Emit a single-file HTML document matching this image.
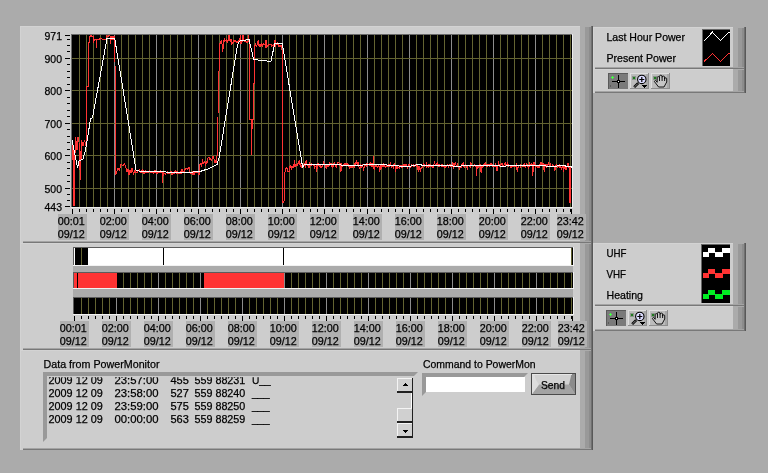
<!DOCTYPE html>
<html><head><meta charset="utf-8"><title>PowerMonitor</title>
<style>html,body{margin:0;padding:0;background:#ababab;}svg{display:block;will-change:transform}</style></head>
<body><svg width="768" height="473" viewBox="0 0 768 473">
<rect width="768" height="473" fill="#ababab"/>
<rect x="20" y="26" width="560" height="217" fill="#cdcdcd" />
<rect x="20" y="26" width="560" height="1" fill="#d3d3d3" />
<rect x="20" y="26" width="1" height="217" fill="#d3d3d3" />
<rect x="580" y="27" width="5" height="216" fill="#ababab" />
<rect x="585" y="27" width="6" height="216" fill="#999999" />
<rect x="589" y="27" width="2" height="216" fill="#8c8c8c" />
<rect x="591" y="26" width="1" height="217" fill="#707070" />
<rect x="592" y="26" width="1" height="217" fill="#585858" />
<rect x="23" y="241" width="568" height="1" fill="#a4a4a4" />
<rect x="23" y="242" width="568" height="1" fill="#787878" />
<rect x="20" y="243" width="560" height="107" fill="#cdcdcd" />
<rect x="20" y="243" width="560" height="1" fill="#d3d3d3" />
<rect x="20" y="243" width="1" height="107" fill="#d3d3d3" />
<rect x="580" y="244" width="5" height="106" fill="#ababab" />
<rect x="585" y="244" width="6" height="106" fill="#999999" />
<rect x="589" y="244" width="2" height="106" fill="#8c8c8c" />
<rect x="591" y="243" width="1" height="107" fill="#707070" />
<rect x="592" y="243" width="1" height="107" fill="#585858" />
<rect x="23" y="348" width="568" height="1" fill="#a4a4a4" />
<rect x="23" y="349" width="568" height="1" fill="#787878" />
<rect x="20" y="350" width="560" height="100" fill="#cdcdcd" />
<rect x="20" y="350" width="560" height="1" fill="#d3d3d3" />
<rect x="20" y="350" width="1" height="100" fill="#d3d3d3" />
<rect x="580" y="351" width="5" height="99" fill="#ababab" />
<rect x="585" y="351" width="6" height="99" fill="#999999" />
<rect x="589" y="351" width="2" height="99" fill="#8c8c8c" />
<rect x="591" y="350" width="1" height="100" fill="#707070" />
<rect x="592" y="350" width="1" height="100" fill="#585858" />
<rect x="23" y="448" width="568" height="1" fill="#a4a4a4" />
<rect x="23" y="449" width="568" height="1" fill="#787878" />
<rect x="71" y="34" width="502" height="174" fill="#ececec" />
<rect x="71" y="34" width="501" height="173" fill="#6a6a6a" />
<rect x="72" y="35" width="500" height="172" fill="#000" />
<g shape-rendering="crispEdges">
<rect x="79" y="35" width="1" height="172" fill="#636331"/>
<rect x="86" y="35" width="1" height="172" fill="#636331"/>
<rect x="93" y="35" width="1" height="172" fill="#636331"/>
<rect x="100" y="35" width="1" height="172" fill="#636331"/>
<rect x="107" y="35" width="1" height="172" fill="#636331"/>
<rect x="114" y="35" width="1" height="172" fill="#8c8c8c"/>
<rect x="121" y="35" width="1" height="172" fill="#636331"/>
<rect x="128" y="35" width="1" height="172" fill="#636331"/>
<rect x="135" y="35" width="1" height="172" fill="#636331"/>
<rect x="142" y="35" width="1" height="172" fill="#636331"/>
<rect x="149" y="35" width="1" height="172" fill="#636331"/>
<rect x="156" y="35" width="1" height="172" fill="#8c8c8c"/>
<rect x="163" y="35" width="1" height="172" fill="#636331"/>
<rect x="170" y="35" width="1" height="172" fill="#636331"/>
<rect x="177" y="35" width="1" height="172" fill="#636331"/>
<rect x="184" y="35" width="1" height="172" fill="#636331"/>
<rect x="191" y="35" width="1" height="172" fill="#636331"/>
<rect x="198" y="35" width="1" height="172" fill="#8c8c8c"/>
<rect x="205" y="35" width="1" height="172" fill="#636331"/>
<rect x="212" y="35" width="1" height="172" fill="#636331"/>
<rect x="219" y="35" width="1" height="172" fill="#636331"/>
<rect x="226" y="35" width="1" height="172" fill="#636331"/>
<rect x="233" y="35" width="1" height="172" fill="#636331"/>
<rect x="240" y="35" width="1" height="172" fill="#8c8c8c"/>
<rect x="247" y="35" width="1" height="172" fill="#636331"/>
<rect x="254" y="35" width="1" height="172" fill="#636331"/>
<rect x="261" y="35" width="1" height="172" fill="#636331"/>
<rect x="268" y="35" width="1" height="172" fill="#636331"/>
<rect x="275" y="35" width="1" height="172" fill="#636331"/>
<rect x="282" y="35" width="1" height="172" fill="#8c8c8c"/>
<rect x="289" y="35" width="1" height="172" fill="#636331"/>
<rect x="296" y="35" width="1" height="172" fill="#636331"/>
<rect x="303" y="35" width="1" height="172" fill="#636331"/>
<rect x="310" y="35" width="1" height="172" fill="#636331"/>
<rect x="317" y="35" width="1" height="172" fill="#636331"/>
<rect x="324" y="35" width="1" height="172" fill="#8c8c8c"/>
<rect x="332" y="35" width="1" height="172" fill="#636331"/>
<rect x="339" y="35" width="1" height="172" fill="#636331"/>
<rect x="346" y="35" width="1" height="172" fill="#636331"/>
<rect x="353" y="35" width="1" height="172" fill="#636331"/>
<rect x="360" y="35" width="1" height="172" fill="#636331"/>
<rect x="367" y="35" width="1" height="172" fill="#8c8c8c"/>
<rect x="374" y="35" width="1" height="172" fill="#636331"/>
<rect x="381" y="35" width="1" height="172" fill="#636331"/>
<rect x="388" y="35" width="1" height="172" fill="#636331"/>
<rect x="395" y="35" width="1" height="172" fill="#636331"/>
<rect x="402" y="35" width="1" height="172" fill="#636331"/>
<rect x="409" y="35" width="1" height="172" fill="#8c8c8c"/>
<rect x="416" y="35" width="1" height="172" fill="#636331"/>
<rect x="423" y="35" width="1" height="172" fill="#636331"/>
<rect x="430" y="35" width="1" height="172" fill="#636331"/>
<rect x="437" y="35" width="1" height="172" fill="#636331"/>
<rect x="444" y="35" width="1" height="172" fill="#636331"/>
<rect x="451" y="35" width="1" height="172" fill="#8c8c8c"/>
<rect x="458" y="35" width="1" height="172" fill="#636331"/>
<rect x="465" y="35" width="1" height="172" fill="#636331"/>
<rect x="472" y="35" width="1" height="172" fill="#636331"/>
<rect x="479" y="35" width="1" height="172" fill="#636331"/>
<rect x="486" y="35" width="1" height="172" fill="#636331"/>
<rect x="493" y="35" width="1" height="172" fill="#8c8c8c"/>
<rect x="500" y="35" width="1" height="172" fill="#636331"/>
<rect x="507" y="35" width="1" height="172" fill="#636331"/>
<rect x="514" y="35" width="1" height="172" fill="#636331"/>
<rect x="521" y="35" width="1" height="172" fill="#636331"/>
<rect x="528" y="35" width="1" height="172" fill="#636331"/>
<rect x="535" y="35" width="1" height="172" fill="#8c8c8c"/>
<rect x="542" y="35" width="1" height="172" fill="#636331"/>
<rect x="549" y="35" width="1" height="172" fill="#636331"/>
<rect x="556" y="35" width="1" height="172" fill="#636331"/>
<rect x="563" y="35" width="1" height="172" fill="#636331"/>
<rect x="570" y="35" width="1" height="172" fill="#636331"/>
<rect x="72" y="58" width="500" height="1" fill="#636331"/>
<rect x="72" y="90" width="500" height="1" fill="#636331"/>
<rect x="72" y="123" width="500" height="1" fill="#636331"/>
<rect x="72" y="155" width="500" height="1" fill="#636331"/>
<rect x="72" y="188" width="500" height="1" fill="#636331"/>
<rect x="65" y="35" width="5" height="1" fill="#000"/>
<rect x="65" y="58" width="5" height="1" fill="#000"/>
<rect x="65" y="90" width="5" height="1" fill="#000"/>
<rect x="65" y="123" width="5" height="1" fill="#000"/>
<rect x="65" y="155" width="5" height="1" fill="#000"/>
<rect x="65" y="188" width="5" height="1" fill="#000"/>
<rect x="65" y="206" width="5" height="1" fill="#000"/>
<rect x="67" y="200" width="3" height="1" fill="#000"/>
<rect x="67" y="194" width="3" height="1" fill="#000"/>
<rect x="67" y="181" width="3" height="1" fill="#000"/>
<rect x="67" y="175" width="3" height="1" fill="#000"/>
<rect x="67" y="168" width="3" height="1" fill="#000"/>
<rect x="67" y="162" width="3" height="1" fill="#000"/>
<rect x="67" y="149" width="3" height="1" fill="#000"/>
<rect x="67" y="142" width="3" height="1" fill="#000"/>
<rect x="67" y="136" width="3" height="1" fill="#000"/>
<rect x="67" y="129" width="3" height="1" fill="#000"/>
<rect x="67" y="116" width="3" height="1" fill="#000"/>
<rect x="67" y="110" width="3" height="1" fill="#000"/>
<rect x="67" y="103" width="3" height="1" fill="#000"/>
<rect x="67" y="97" width="3" height="1" fill="#000"/>
<rect x="67" y="84" width="3" height="1" fill="#000"/>
<rect x="67" y="77" width="3" height="1" fill="#000"/>
<rect x="67" y="71" width="3" height="1" fill="#000"/>
<rect x="67" y="64" width="3" height="1" fill="#000"/>
<rect x="67" y="51" width="3" height="1" fill="#000"/>
<rect x="67" y="45" width="3" height="1" fill="#000"/>
<rect x="67" y="39" width="3" height="1" fill="#000"/>
<rect x="72" y="209" width="1" height="5" fill="#000"/>
<rect x="571" y="209" width="1" height="5" fill="#000"/>
<rect x="79" y="209" width="1" height="3" fill="#000"/>
<rect x="86" y="209" width="1" height="3" fill="#000"/>
<rect x="93" y="209" width="1" height="3" fill="#000"/>
<rect x="100" y="209" width="1" height="3" fill="#000"/>
<rect x="107" y="209" width="1" height="3" fill="#000"/>
<rect x="114" y="209" width="1" height="5" fill="#000"/>
<rect x="121" y="209" width="1" height="3" fill="#000"/>
<rect x="128" y="209" width="1" height="3" fill="#000"/>
<rect x="135" y="209" width="1" height="3" fill="#000"/>
<rect x="142" y="209" width="1" height="3" fill="#000"/>
<rect x="149" y="209" width="1" height="3" fill="#000"/>
<rect x="156" y="209" width="1" height="5" fill="#000"/>
<rect x="163" y="209" width="1" height="3" fill="#000"/>
<rect x="170" y="209" width="1" height="3" fill="#000"/>
<rect x="177" y="209" width="1" height="3" fill="#000"/>
<rect x="184" y="209" width="1" height="3" fill="#000"/>
<rect x="191" y="209" width="1" height="3" fill="#000"/>
<rect x="198" y="209" width="1" height="5" fill="#000"/>
<rect x="205" y="209" width="1" height="3" fill="#000"/>
<rect x="212" y="209" width="1" height="3" fill="#000"/>
<rect x="219" y="209" width="1" height="3" fill="#000"/>
<rect x="226" y="209" width="1" height="3" fill="#000"/>
<rect x="233" y="209" width="1" height="3" fill="#000"/>
<rect x="240" y="209" width="1" height="5" fill="#000"/>
<rect x="247" y="209" width="1" height="3" fill="#000"/>
<rect x="254" y="209" width="1" height="3" fill="#000"/>
<rect x="261" y="209" width="1" height="3" fill="#000"/>
<rect x="268" y="209" width="1" height="3" fill="#000"/>
<rect x="275" y="209" width="1" height="3" fill="#000"/>
<rect x="282" y="209" width="1" height="5" fill="#000"/>
<rect x="289" y="209" width="1" height="3" fill="#000"/>
<rect x="296" y="209" width="1" height="3" fill="#000"/>
<rect x="303" y="209" width="1" height="3" fill="#000"/>
<rect x="310" y="209" width="1" height="3" fill="#000"/>
<rect x="317" y="209" width="1" height="3" fill="#000"/>
<rect x="324" y="209" width="1" height="5" fill="#000"/>
<rect x="332" y="209" width="1" height="3" fill="#000"/>
<rect x="339" y="209" width="1" height="3" fill="#000"/>
<rect x="346" y="209" width="1" height="3" fill="#000"/>
<rect x="353" y="209" width="1" height="3" fill="#000"/>
<rect x="360" y="209" width="1" height="3" fill="#000"/>
<rect x="367" y="209" width="1" height="5" fill="#000"/>
<rect x="374" y="209" width="1" height="3" fill="#000"/>
<rect x="381" y="209" width="1" height="3" fill="#000"/>
<rect x="388" y="209" width="1" height="3" fill="#000"/>
<rect x="395" y="209" width="1" height="3" fill="#000"/>
<rect x="402" y="209" width="1" height="3" fill="#000"/>
<rect x="409" y="209" width="1" height="5" fill="#000"/>
<rect x="416" y="209" width="1" height="3" fill="#000"/>
<rect x="423" y="209" width="1" height="3" fill="#000"/>
<rect x="430" y="209" width="1" height="3" fill="#000"/>
<rect x="437" y="209" width="1" height="3" fill="#000"/>
<rect x="444" y="209" width="1" height="3" fill="#000"/>
<rect x="451" y="209" width="1" height="5" fill="#000"/>
<rect x="458" y="209" width="1" height="3" fill="#000"/>
<rect x="465" y="209" width="1" height="3" fill="#000"/>
<rect x="472" y="209" width="1" height="3" fill="#000"/>
<rect x="479" y="209" width="1" height="3" fill="#000"/>
<rect x="486" y="209" width="1" height="3" fill="#000"/>
<rect x="493" y="209" width="1" height="5" fill="#000"/>
<rect x="500" y="209" width="1" height="3" fill="#000"/>
<rect x="507" y="209" width="1" height="3" fill="#000"/>
<rect x="514" y="209" width="1" height="3" fill="#000"/>
<rect x="521" y="209" width="1" height="3" fill="#000"/>
<rect x="528" y="209" width="1" height="3" fill="#000"/>
<rect x="535" y="209" width="1" height="5" fill="#000"/>
<rect x="542" y="209" width="1" height="3" fill="#000"/>
<rect x="549" y="209" width="1" height="3" fill="#000"/>
<rect x="556" y="209" width="1" height="3" fill="#000"/>
<rect x="563" y="209" width="1" height="3" fill="#000"/>
<rect x="570" y="209" width="1" height="3" fill="#000"/>
</g>
<g font-family="Liberation Sans, sans-serif" font-size="11" stroke="#000" stroke-width="0.25" fill="#000">
<text x="62" y="40" text-anchor="end"  textLength="17.5" lengthAdjust="spacingAndGlyphs">971</text>
<text x="62" y="63" text-anchor="end"  textLength="17.5" lengthAdjust="spacingAndGlyphs">900</text>
<text x="62" y="95" text-anchor="end"  textLength="17.5" lengthAdjust="spacingAndGlyphs">800</text>
<text x="62" y="128" text-anchor="end"  textLength="17.5" lengthAdjust="spacingAndGlyphs">700</text>
<text x="62" y="160" text-anchor="end"  textLength="17.5" lengthAdjust="spacingAndGlyphs">600</text>
<text x="62" y="193" text-anchor="end"  textLength="17.5" lengthAdjust="spacingAndGlyphs">500</text>
<text x="62" y="211" text-anchor="end"  textLength="17.5" lengthAdjust="spacingAndGlyphs">443</text>
</g>
<g font-family="Liberation Sans, sans-serif" font-size="11" stroke="#000" stroke-width="0.25" fill="#000">
<rect x="58" y="214" width="29" height="26" fill="#b0b0b0" stroke="none"/>
<text x="57.7" y="224.5" text-anchor="start" textLength="27" lengthAdjust="spacingAndGlyphs">00:01</text>
<text x="57.7" y="237.5" text-anchor="start" textLength="27" lengthAdjust="spacingAndGlyphs">09/12</text>
<rect x="100" y="214" width="29" height="26" fill="#b0b0b0" stroke="none"/>
<text x="99.7" y="224.5" text-anchor="start" textLength="27" lengthAdjust="spacingAndGlyphs">02:00</text>
<text x="99.7" y="237.5" text-anchor="start" textLength="27" lengthAdjust="spacingAndGlyphs">09/12</text>
<rect x="142" y="214" width="29" height="26" fill="#b0b0b0" stroke="none"/>
<text x="141.7" y="224.5" text-anchor="start" textLength="27" lengthAdjust="spacingAndGlyphs">04:00</text>
<text x="141.7" y="237.5" text-anchor="start" textLength="27" lengthAdjust="spacingAndGlyphs">09/12</text>
<rect x="184" y="214" width="29" height="26" fill="#b0b0b0" stroke="none"/>
<text x="183.7" y="224.5" text-anchor="start" textLength="27" lengthAdjust="spacingAndGlyphs">06:00</text>
<text x="183.7" y="237.5" text-anchor="start" textLength="27" lengthAdjust="spacingAndGlyphs">09/12</text>
<rect x="226" y="214" width="29" height="26" fill="#b0b0b0" stroke="none"/>
<text x="225.7" y="224.5" text-anchor="start" textLength="27" lengthAdjust="spacingAndGlyphs">08:00</text>
<text x="225.7" y="237.5" text-anchor="start" textLength="27" lengthAdjust="spacingAndGlyphs">09/12</text>
<rect x="268" y="214" width="29" height="26" fill="#b0b0b0" stroke="none"/>
<text x="267.7" y="224.5" text-anchor="start" textLength="27" lengthAdjust="spacingAndGlyphs">10:00</text>
<text x="267.7" y="237.5" text-anchor="start" textLength="27" lengthAdjust="spacingAndGlyphs">09/12</text>
<rect x="310" y="214" width="29" height="26" fill="#b0b0b0" stroke="none"/>
<text x="309.7" y="224.5" text-anchor="start" textLength="27" lengthAdjust="spacingAndGlyphs">12:00</text>
<text x="309.7" y="237.5" text-anchor="start" textLength="27" lengthAdjust="spacingAndGlyphs">09/12</text>
<rect x="353" y="214" width="29" height="26" fill="#b0b0b0" stroke="none"/>
<text x="352.7" y="224.5" text-anchor="start" textLength="27" lengthAdjust="spacingAndGlyphs">14:00</text>
<text x="352.7" y="237.5" text-anchor="start" textLength="27" lengthAdjust="spacingAndGlyphs">09/12</text>
<rect x="395" y="214" width="29" height="26" fill="#b0b0b0" stroke="none"/>
<text x="394.7" y="224.5" text-anchor="start" textLength="27" lengthAdjust="spacingAndGlyphs">16:00</text>
<text x="394.7" y="237.5" text-anchor="start" textLength="27" lengthAdjust="spacingAndGlyphs">09/12</text>
<rect x="437" y="214" width="29" height="26" fill="#b0b0b0" stroke="none"/>
<text x="436.7" y="224.5" text-anchor="start" textLength="27" lengthAdjust="spacingAndGlyphs">18:00</text>
<text x="436.7" y="237.5" text-anchor="start" textLength="27" lengthAdjust="spacingAndGlyphs">09/12</text>
<rect x="479" y="214" width="29" height="26" fill="#b0b0b0" stroke="none"/>
<text x="478.7" y="224.5" text-anchor="start" textLength="27" lengthAdjust="spacingAndGlyphs">20:00</text>
<text x="478.7" y="237.5" text-anchor="start" textLength="27" lengthAdjust="spacingAndGlyphs">09/12</text>
<rect x="521" y="214" width="29" height="26" fill="#b0b0b0" stroke="none"/>
<text x="520.7" y="224.5" text-anchor="start" textLength="27" lengthAdjust="spacingAndGlyphs">22:00</text>
<text x="520.7" y="237.5" text-anchor="start" textLength="27" lengthAdjust="spacingAndGlyphs">09/12</text>
<rect x="557" y="214" width="29" height="26" fill="#b0b0b0" stroke="none"/>
<text x="556.7" y="224.5" text-anchor="start" textLength="27" lengthAdjust="spacingAndGlyphs">23:42</text>
<text x="556.7" y="237.5" text-anchor="start" textLength="27" lengthAdjust="spacingAndGlyphs">09/12</text>
</g>
<clipPath id="c1"><rect x="72" y="35" width="500" height="172"/></clipPath><g clip-path="url(#c1)">
<polyline points="72.0,140.0 72.5,160.0 73.0,150.0 73.2,205.0 74.2,205.0 74.5,170.0 75.5,137.0 77.0,150.0 78.0,137.0 79.0,142.0 79.5,170.0 80.0,150.0 80.5,180.0 81.5,140.0 83.0,146.0 84.5,140.0 86.0,146.0 86.5,120.0 87.0,86.0 88.0,86.0 88.0,42.0 89.0,42.0 89.0,36.0 90.0,37.0 91.0,35.5 92.0,37.0 93.0,36.0 93.7,43.0 94.5,39.0 96.0,39.0 96.5,47.5 97.0,39.0 99.0,39.5 100.0,38.5 102.0,39.0 104.0,39.0 106.0,39.0 106.5,36.0 108.0,37.0 109.0,35.5 110.0,36.0 110.6,43.5 111.5,36.0 112.5,36.0 113.0,40.0 114.0,36.0 114.5,50.0 115.0,62.0 115.5,175.0 116.5,172.0 118.0,168.0 119.5,170.0 121.0,164.0 123.0,166.0 124.5,163.5 126.0,168.0 127.0,172.0 128.0,169.0 129.0,175.0 130.0,170.0 131.0,173.0 132.0,168.0 133.5,174.0 135.0,170.0 136.0,173.0 137.0,172.0 137.4,172.0 137.7,172.0 138.1,171.0 138.4,170.0 138.8,170.0 139.2,171.0 139.5,170.0 139.9,171.0 140.2,172.0 140.6,171.0 141.0,171.0 141.3,170.0 141.7,172.0 142.0,172.0 142.4,172.0 142.8,169.0 143.1,170.0 143.5,172.0 143.8,173.0 144.2,172.0 144.6,173.0 144.9,172.0 145.3,171.0 145.6,172.0 146.0,172.0 146.4,172.0 146.7,172.0 147.1,171.0 147.4,172.0 147.8,172.0 148.2,172.0 148.5,171.0 148.9,171.0 149.2,170.0 149.6,170.0 150.0,172.0 150.3,172.0 150.7,172.0 151.0,171.0 151.4,172.0 151.8,171.0 152.1,171.0 152.5,172.0 152.8,172.0 153.2,171.0 153.6,171.0 153.9,173.0 154.3,172.0 154.6,171.0 155.0,170.0 155.4,172.0 155.7,172.0 156.1,172.0 156.4,173.0 156.8,173.0 157.2,172.0 157.5,173.0 157.9,173.0 158.2,172.0 158.6,172.0 159.0,173.0 159.3,172.0 159.7,171.0 160.0,171.0 160.4,172.0 160.8,171.0 161.1,172.0 161.5,172.0 161.8,171.0 162.2,173.0 162.6,183.0 162.9,173.0 163.3,176.0 163.6,172.0 164.0,173.0 164.4,173.0 164.7,173.0 165.1,173.0 165.4,174.0 165.8,174.0 166.2,172.0 166.5,172.0 166.9,172.0 167.2,173.0 167.6,172.0 168.0,173.0 168.3,172.0 168.7,174.0 169.0,173.0 169.4,173.0 169.8,173.0 170.1,172.0 170.5,171.0 170.8,171.0 171.2,172.0 171.6,174.0 171.9,174.0 172.3,174.0 172.6,174.0 173.0,173.0 173.4,173.0 173.7,173.0 174.1,173.0 174.4,174.0 174.8,172.0 175.2,171.0 175.5,172.0 175.9,173.0 176.2,173.0 176.6,173.0 177.0,171.0 177.3,172.0 177.7,173.0 178.0,174.0 178.4,172.0 178.8,172.0 179.1,172.0 179.5,172.0 179.8,173.0 180.2,172.0 180.6,173.0 180.9,174.0 181.3,173.0 181.6,171.0 182.0,169.0 182.4,169.0 182.7,171.0 183.1,171.0 183.4,172.0 183.8,171.0 184.2,171.0 184.5,172.0 184.9,172.0 185.0,169.0 185.4,169.0 185.7,168.0 186.1,168.0 186.4,168.0 186.8,168.0 187.2,169.0 187.5,169.0 187.9,169.0 188.2,168.0 188.6,167.0 189.0,167.0 189.3,168.0 189.7,167.0 190.0,172.0 190.4,173.0 190.7,172.0 191.1,172.0 191.4,173.0 191.8,172.0 192.2,172.0 192.5,171.0 192.9,174.0 193.2,174.0 193.6,173.0 194.0,174.0 194.3,174.0 194.7,174.0 195.0,172.0 195.4,172.0 195.8,172.0 196.1,173.0 196.5,172.0 196.8,172.0 197.2,172.0 197.6,172.0 197.9,173.0 198.5,174.5 199.5,174.0 200.0,164.0 200.4,164.0 200.7,163.0 201.1,166.0 201.4,167.0 201.8,164.0 202.2,163.0 202.5,159.0 202.9,163.0 203.2,163.0 203.6,163.0 204.0,162.0 204.3,161.0 204.7,163.0 205.0,162.0 205.4,164.0 205.8,165.0 206.1,163.0 206.5,162.0 206.8,163.0 207.2,161.0 207.6,162.0 207.9,161.0 208.0,158.0 208.4,157.0 208.7,157.0 209.1,157.0 209.4,160.0 209.8,159.0 210.2,159.0 210.5,158.0 210.9,158.0 211.2,161.0 211.6,160.0 212.0,159.0 212.3,157.0 212.7,158.0 213.0,158.0 213.4,156.0 213.8,156.0 214.1,160.0 214.5,161.0 214.8,163.0 215.2,160.0 215.6,162.0 215.9,163.0 216.3,162.0 216.6,162.0 217.0,156.0 217.5,155.0 218.0,120.0 218.2,72.0 219.0,72.0 219.5,43.0 220.0,43.0 220.4,42.0 220.7,43.0 221.1,44.0 221.4,43.0 221.8,40.0 222.2,47.0 222.5,44.0 222.9,52.0 223.2,45.0 223.6,40.0 224.0,41.0 224.3,38.0 224.7,41.0 225.0,41.0 225.4,40.0 225.8,40.0 226.1,40.0 226.5,39.0 226.8,42.0 227.2,41.0 227.6,42.0 227.9,42.0 228.3,40.0 228.6,40.0 229.0,35.0 229.4,39.0 229.7,39.0 230.1,41.0 230.4,40.0 230.8,41.0 231.2,40.0 231.5,39.0 231.9,45.0 232.2,42.0 232.6,44.0 233.0,42.0 233.3,43.0 233.7,41.0 234.0,40.0 234.4,41.0 234.8,41.0 235.1,40.0 235.5,42.0 235.8,41.0 236.2,42.0 236.6,42.0 236.9,42.0 237.3,41.0 237.6,41.0 238.0,43.0 238.4,40.0 238.7,40.0 239.1,40.0 239.4,39.0 239.8,41.0 240.2,35.0 240.5,43.0 240.9,44.0 241.2,42.0 241.6,43.0 242.0,41.0 242.3,41.0 242.7,41.0 243.0,35.0 243.4,40.0 243.8,39.0 244.1,40.0 244.5,41.0 244.8,41.0 245.2,40.0 245.6,41.0 245.9,40.0 246.3,42.0 246.6,42.0 247.0,42.0 247.4,42.0 247.7,41.0 248.1,41.0 248.4,35.0 248.8,41.0 249.2,41.0 249.7,60.0 249.9,119.0 251.3,119.0 251.3,155.0 251.8,140.0 252.2,119.0 253.8,119.0 254.1,70.0 254.3,45.0 254.5,46.0 254.9,45.0 255.2,44.0 255.6,45.0 255.9,45.0 256.3,46.0 256.7,46.0 257.0,45.0 257.4,44.0 257.7,45.0 258.1,40.0 258.5,44.0 258.8,45.0 259.2,46.0 259.5,45.0 259.9,46.0 260.3,45.0 260.6,46.0 261.0,45.0 261.3,44.0 261.7,45.0 262.1,46.0 262.4,44.0 262.8,44.0 263.1,45.0 263.5,44.0 263.9,45.0 264.2,44.0 264.6,44.0 264.9,44.0 265.3,47.0 265.7,47.0 266.0,40.0 266.4,45.0 266.7,47.0 267.1,47.0 267.5,45.0 267.8,45.0 268.2,45.0 268.5,46.0 268.9,44.0 269.3,44.0 269.6,44.0 270.0,45.0 270.3,44.0 270.7,44.0 271.1,44.0 271.4,45.0 271.8,46.0 272.1,45.0 272.5,45.0 272.9,46.0 273.2,45.0 273.6,46.0 273.9,45.0 274.3,44.0 274.7,46.0 275.0,40.0 275.4,46.0 275.7,46.0 276.1,45.0 276.5,44.0 276.8,44.0 277.2,43.0 277.5,44.0 277.9,43.0 278.3,43.0 278.6,45.0 279.0,47.0 279.3,45.0 279.7,45.0 280.1,46.0 280.4,46.0 280.8,46.0 281.1,45.0 281.5,46.0 281.9,45.0 282.3,60.0 282.7,202.0 284.0,202.0 284.3,180.0 285.0,172.0 285.5,170.0 285.9,169.0 286.2,167.0 286.6,169.0 286.9,168.0 287.3,169.0 287.7,171.0 288.0,172.0 288.4,171.0 288.7,171.0 289.1,172.0 289.5,168.0 289.8,166.0 290.2,166.0 290.5,165.0 290.9,168.0 291.3,169.0 291.6,168.0 292.0,166.0 292.3,167.0 292.7,167.0 293.1,167.0 293.4,164.0 293.8,164.0 294.1,167.0 294.5,160.0 294.9,165.0 295.2,164.0 295.6,166.0 295.9,167.0 296.3,165.0 296.7,164.0 297.0,164.0 297.4,163.0 297.7,166.0 298.1,163.0 298.5,162.0 298.8,164.0 299.2,160.0 299.5,160.0 299.9,164.0 300.0,164.0 300.4,163.0 300.7,166.0 301.1,167.0 301.4,168.0 301.8,166.0 302.2,167.0 302.5,167.0 302.9,165.0 303.2,164.0 303.6,164.0 304.0,165.0 304.3,164.0 304.7,165.0 305.0,165.0 305.4,166.0 305.8,164.0 306.1,160.0 306.5,165.0 306.8,164.0 307.2,165.0 307.6,164.0 307.9,164.0 308.3,164.0 308.6,166.0 309.0,165.0 309.4,166.0 309.7,164.0 310.1,165.0 310.4,165.0 310.8,165.0 311.2,163.0 311.5,165.0 311.9,164.0 312.2,164.0 312.6,164.0 313.0,164.0 313.3,164.0 313.7,165.0 314.0,164.0 314.4,166.0 314.8,169.0 315.1,166.0 315.5,166.0 315.8,166.0 316.2,166.0 316.6,165.0 316.9,171.5 317.3,164.0 317.6,164.0 318.0,163.0 318.4,165.0 318.7,165.0 319.1,166.0 319.4,166.0 319.8,165.0 320.2,165.0 320.5,167.0 320.9,166.0 321.2,166.0 321.6,167.0 322.0,166.0 322.3,165.0 322.7,166.0 323.0,164.0 323.4,163.0 323.8,165.0 324.1,164.0 324.5,164.0 324.8,163.0 325.2,166.0 325.6,167.0 325.9,168.0 326.3,168.0 326.6,166.0 327.0,167.0 327.4,166.0 327.7,165.0 328.1,164.0 328.4,164.0 328.8,166.0 329.2,165.0 329.5,162.0 329.9,163.0 330.2,163.0 330.6,164.0 331.0,164.0 331.3,163.0 331.7,166.0 332.0,166.0 332.4,167.0 332.8,166.0 333.1,167.0 333.5,166.0 333.8,164.0 334.2,163.0 334.6,165.0 334.9,164.0 335.3,164.0 335.6,166.0 336.0,167.0 336.4,167.0 336.7,166.0 337.1,165.0 337.4,164.0 337.8,162.0 338.2,162.0 338.5,162.0 338.9,163.0 339.2,164.0 339.6,165.0 340.0,164.0 340.3,164.0 340.7,163.0 341.0,171.5 341.4,165.0 341.8,164.0 342.1,165.0 342.5,166.0 342.8,167.0 343.2,165.0 343.6,164.0 343.9,164.0 344.3,163.0 344.6,163.0 345.0,165.0 345.4,164.0 345.7,165.0 346.1,166.0 346.4,165.0 346.8,164.0 347.2,166.0 347.5,164.0 347.9,165.0 348.2,166.0 348.6,165.0 349.0,167.0 349.3,168.0 349.7,168.0 350.0,165.0 350.4,166.0 350.8,167.0 351.1,166.0 351.5,167.0 351.8,166.0 352.2,167.0 352.6,166.0 352.9,167.0 353.3,166.0 353.6,165.0 354.0,167.0 354.4,167.0 354.7,166.0 355.1,162.0 355.4,164.0 355.8,163.0 356.2,163.0 356.5,160.0 356.9,163.0 357.2,166.0 357.6,164.0 358.0,162.0 358.3,165.0 358.7,165.0 359.0,167.0 359.4,167.0 359.8,168.0 360.1,168.0 360.5,166.0 360.8,164.0 361.2,166.0 361.6,167.0 361.9,165.0 362.3,164.0 362.6,164.0 363.0,167.0 363.4,171.0 363.7,170.0 364.1,168.0 364.4,166.0 364.8,164.0 365.2,164.0 365.5,165.0 365.9,166.0 366.2,167.0 366.6,165.0 367.0,166.0 367.3,164.0 367.7,165.0 368.0,164.0 368.4,164.0 368.8,164.0 369.1,164.0 369.5,165.0 369.8,164.0 370.2,163.0 370.6,165.0 370.9,166.0 371.3,165.0 371.6,167.0 372.0,165.0 372.4,164.0 372.7,165.0 373.1,167.0 373.4,156.5 373.8,167.0 374.2,170.0 374.5,168.0 374.9,167.0 375.2,165.0 375.6,166.0 376.0,165.0 376.3,166.0 376.7,166.0 377.0,166.0 377.4,166.0 377.8,168.0 378.1,167.0 378.5,165.0 378.8,165.0 379.2,167.0 379.6,167.0 379.9,171.5 380.3,165.0 380.6,164.0 381.0,166.0 381.4,167.0 381.7,165.0 382.1,165.0 382.4,167.0 382.8,165.0 383.2,163.0 383.5,166.0 383.9,166.0 384.2,165.0 384.6,166.0 385.0,167.0 385.3,167.0 385.7,167.0 386.0,166.0 386.4,164.0 386.8,166.0 387.1,166.0 387.5,166.0 387.8,166.0 388.2,166.0 388.6,165.0 388.9,166.0 389.3,166.0 389.6,164.0 390.0,164.0 390.4,166.0 390.7,164.0 391.1,165.0 391.4,165.0 391.8,167.0 392.2,166.0 392.5,165.0 392.9,165.0 393.2,164.0 393.6,167.0 394.0,166.0 394.3,164.0 394.7,165.0 395.0,166.0 395.4,171.5 395.8,167.0 396.1,168.0 396.5,167.0 396.8,168.0 397.2,168.0 397.6,167.0 397.9,168.0 398.3,167.0 398.6,167.0 399.0,168.0 399.4,168.0 399.7,167.0 400.1,165.0 400.4,166.0 400.8,166.0 401.2,167.0 401.5,166.0 401.9,165.0 402.2,166.0 402.6,167.0 403.0,166.0 403.3,164.0 403.7,164.0 404.0,165.0 404.4,165.0 404.8,164.0 405.1,164.0 405.5,165.0 405.8,164.0 406.2,166.0 406.6,165.0 406.9,166.0 407.3,167.0 407.6,168.0 408.0,167.0 408.4,166.0 408.7,165.0 409.1,166.0 409.4,164.0 409.8,166.0 410.2,166.0 410.5,167.0 410.9,166.0 411.2,166.0 411.6,165.0 412.0,166.0 412.3,165.0 412.7,165.0 413.0,166.0 413.4,165.0 413.8,166.0 414.1,167.0 414.5,166.0 414.8,165.0 415.2,165.0 415.6,164.0 415.9,164.0 416.3,165.0 416.6,164.0 417.0,167.0 417.4,165.0 417.7,165.0 418.1,171.5 418.4,167.0 418.8,167.0 419.2,166.0 419.5,166.0 419.9,169.0 420.2,171.0 420.6,170.0 421.0,168.0 421.3,168.0 421.7,167.0 422.0,167.0 422.4,167.0 422.8,165.0 423.1,165.0 423.5,164.0 423.8,163.0 424.2,166.0 424.6,165.0 424.9,166.0 425.3,165.0 425.6,165.0 426.0,165.0 426.4,164.0 426.7,166.0 427.1,165.0 427.4,165.0 427.8,166.0 428.2,167.0 428.5,165.0 428.9,166.0 429.2,165.0 429.6,166.0 430.0,164.0 430.3,166.0 430.7,165.0 431.0,165.0 431.4,166.0 431.8,166.0 432.1,166.0 432.5,166.0 432.8,167.0 433.2,166.0 433.6,167.0 433.9,165.0 434.3,161.0 434.6,162.0 435.0,164.0 435.4,166.0 435.7,165.0 436.1,166.0 436.4,165.0 436.8,164.0 437.2,163.0 437.5,164.0 437.9,165.0 438.2,166.0 438.6,165.0 439.0,166.0 439.3,166.0 439.7,164.0 440.0,165.0 440.4,165.0 440.8,165.0 441.1,165.0 441.5,167.0 441.8,164.0 442.2,165.0 442.6,166.0 442.9,164.0 443.3,166.0 443.6,166.0 444.0,167.0 444.4,167.0 444.7,166.0 445.1,166.0 445.4,165.0 445.8,167.0 446.2,166.0 446.5,166.0 446.9,165.0 447.2,166.0 447.6,164.0 448.0,166.0 448.3,166.0 448.7,167.0 449.0,166.0 449.4,165.0 449.8,164.0 450.1,164.0 450.5,164.0 450.8,166.0 451.2,166.0 451.6,166.0 451.9,165.0 452.3,164.0 452.6,166.0 453.0,166.0 453.4,167.0 453.7,165.0 454.1,166.0 454.4,164.0 454.8,164.0 455.2,162.0 455.5,164.0 455.9,164.0 456.2,166.0 456.6,166.0 457.0,165.0 457.3,164.0 457.7,165.0 458.0,166.0 458.4,166.0 458.8,167.0 459.1,168.0 459.5,166.0 459.8,170.0 460.2,166.0 460.6,167.0 460.9,167.0 461.3,167.0 461.6,165.0 462.0,164.0 462.4,165.0 462.7,164.0 463.1,163.0 463.4,165.0 463.8,166.0 464.2,166.0 464.5,167.0 464.9,168.0 465.2,164.0 465.6,164.0 466.0,166.0 466.3,166.0 466.7,168.0 467.0,167.0 467.4,168.0 467.8,166.0 468.1,165.0 468.5,165.0 468.8,165.0 469.2,167.0 469.6,165.0 469.9,165.0 470.3,164.0 470.6,166.0 471.0,165.0 471.4,164.0 471.7,165.0 472.1,166.0 472.4,165.0 472.8,165.0 473.2,165.0 473.5,166.0 473.9,165.0 474.2,164.0 474.6,164.0 475.0,166.0 475.3,165.0 475.7,165.0 476.0,167.0 476.4,175.5 476.8,165.0 477.1,166.0 477.5,168.0 477.8,168.0 478.2,167.0 478.6,166.0 478.9,167.0 479.3,166.0 479.6,165.0 480.0,164.0 480.4,169.0 480.7,168.0 481.1,172.5 481.4,168.0 481.8,166.0 482.2,167.0 482.5,167.0 482.9,167.0 483.2,165.0 483.6,166.0 484.0,164.0 484.3,164.0 484.7,163.0 485.0,163.0 485.4,164.0 485.8,163.0 486.1,165.0 486.5,166.0 486.8,166.0 487.2,166.0 487.6,164.0 487.9,164.0 488.3,165.0 488.6,164.0 489.0,166.0 489.4,165.0 489.7,166.0 490.1,165.0 490.4,164.0 490.8,165.0 491.2,163.0 491.5,165.0 491.9,164.0 492.2,165.0 492.6,166.0 493.0,167.0 493.3,165.0 493.7,167.0 494.0,165.0 494.4,166.0 494.8,166.0 495.1,165.0 495.5,164.0 495.8,166.0 496.2,167.0 496.6,168.0 496.9,171.0 497.3,170.0 497.6,168.0 498.0,165.0 498.4,161.0 498.7,165.0 499.1,164.0 499.4,164.0 499.8,166.0 500.2,165.0 500.5,165.0 500.9,164.0 501.2,164.0 501.6,164.0 502.0,163.0 502.3,165.0 502.7,166.0 503.0,165.0 503.4,165.0 503.8,166.0 504.1,165.0 504.5,164.0 504.8,164.0 505.2,163.0 505.6,165.0 505.9,166.0 506.3,165.0 506.6,164.0 507.0,164.0 507.4,166.0 507.7,164.0 508.1,165.0 508.4,164.0 508.8,166.0 509.2,165.0 509.5,165.0 509.9,165.0 510.2,167.0 510.6,167.0 511.0,167.0 511.3,167.0 511.7,168.0 512.0,165.0 512.4,165.0 512.8,166.0 513.1,167.0 513.5,166.0 513.8,166.0 514.2,166.0 514.6,166.0 514.9,165.0 515.3,166.0 515.6,166.0 516.0,165.0 516.4,164.0 516.7,165.0 517.1,171.5 517.4,167.0 517.8,168.0 518.2,167.0 518.5,167.0 518.9,166.0 519.2,165.0 519.6,165.0 520.0,166.0 520.3,168.0 520.7,164.0 521.0,165.0 521.4,165.0 521.8,165.0 522.1,167.0 522.5,166.0 522.8,166.0 523.2,165.0 523.6,167.0 523.9,165.0 524.3,167.0 524.6,165.0 525.0,166.0 525.4,167.0 525.7,166.0 526.1,165.0 526.4,165.0 526.8,164.0 527.2,165.0 527.5,167.0 527.9,165.0 528.2,166.0 528.6,169.0 529.0,167.0 529.3,162.0 529.7,164.0 530.0,164.0 530.4,165.0 530.8,165.0 531.1,164.0 531.5,166.0 531.8,164.0 532.2,165.0 532.6,166.0 532.9,175.5 533.3,165.0 533.6,162.0 534.0,165.0 534.4,164.0 534.7,162.0 535.1,165.0 535.4,167.0 535.8,167.0 536.2,165.0 536.5,166.0 536.9,167.0 537.2,166.0 537.6,167.0 538.0,168.0 538.3,167.0 538.7,165.0 539.0,167.0 539.4,167.0 539.8,165.0 540.1,164.0 540.5,164.0 540.8,163.0 541.2,164.0 541.6,163.0 541.9,165.0 542.3,165.0 542.6,164.0 543.0,163.0 543.4,164.0 543.7,165.0 544.1,171.5 544.4,164.0 544.8,166.0 545.2,164.0 545.5,166.0 545.9,167.0 546.2,168.0 546.6,166.0 547.0,164.0 547.3,164.0 547.7,165.0 548.0,164.0 548.4,164.0 548.8,163.0 549.1,164.0 549.5,166.0 549.8,166.0 550.2,165.0 550.6,164.0 550.9,166.0 551.3,166.0 551.6,166.0 552.0,166.0 552.4,164.0 552.7,164.0 553.1,165.0 553.4,165.0 553.8,166.0 554.2,167.0 554.5,168.0 554.9,171.0 555.2,168.0 555.6,166.0 556.0,165.0 556.3,167.0 556.7,164.0 557.0,165.0 557.4,166.0 557.8,167.0 558.1,167.0 558.5,166.0 558.8,166.0 559.2,167.0 559.6,167.0 559.9,165.0 560.3,166.0 560.6,167.0 561.0,167.0 561.4,170.0 561.7,167.0 562.1,167.0 562.4,167.0 562.8,167.0 563.2,166.0 563.5,171.5 563.9,168.0 564.2,168.0 564.6,167.0 565.0,165.0 565.3,165.0 565.7,167.0 566.0,170.0 566.4,167.0 566.8,167.0 567.1,166.0 567.5,164.0 567.8,163.0 568.2,163.0 568.6,164.0 568.9,168.0 569.3,166.0 569.6,168.0 569.6,202.5 570.5,202.5 570.5,166.0 571.5,166.0" fill="none" stroke="#ff3333" stroke-width="1" stroke-linejoin="miter" shape-rendering="crispEdges"/>
<polyline points="72.0,140.0 74.0,150.0 76.0,160.0 77.5,168.0 79.0,161.0 81.0,160.0 83.0,159.0 85.5,150.0 88.0,135.0 90.5,119.0 92.5,117.5 107.0,38.5 114.7,38.5 128.0,120.0 136.0,170.0 140.0,171.5 160.0,171.5 178.0,173.0 200.0,171.5 208.6,168.7 217.0,164.5 219.0,158.0 222.0,140.0 225.2,120.0 237.6,44.3 239.9,41.0 249.0,39.5 253.7,59.5 270.9,61.4 274.7,43.7 282.3,43.7 302.6,167.0 305.0,164.0 308.0,164.0 313.0,164.0 325.0,164.0 328.0,165.0 336.0,164.0 341.0,165.0 353.0,165.0 358.0,165.0 363.0,165.0 366.0,164.0 371.0,164.0 379.0,164.0 387.0,165.0 399.0,166.0 411.0,166.0 416.0,165.0 419.0,164.0 424.0,166.0 429.0,165.0 441.0,165.0 453.0,166.0 461.0,166.0 466.0,165.0 469.0,165.0 474.0,165.0 477.0,165.0 485.0,165.0 488.0,165.0 500.0,166.0 503.0,166.0 506.0,166.0 511.0,165.0 519.0,166.0 531.0,165.0 534.0,165.0 546.0,166.0 554.0,166.0 557.0,166.0 560.0,165.0 563.0,165.0 568.0,167.0 571.0,166.0 571.5,168.0" fill="none" stroke="#ffffff" stroke-width="1" stroke-linejoin="miter" shape-rendering="crispEdges"/>
</g>
<rect x="73" y="265" width="500" height="33" fill="#ababab" />
<g shape-rendering="crispEdges">
<rect x="73" y="247" width="501" height="19" fill="#f2f2f2"/>
<rect x="73" y="247" width="500" height="18" fill="#5c5c5c"/>
<rect x="74" y="248" width="499" height="17" fill="#000"/>
<rect x="73" y="272" width="501" height="17" fill="#f2f2f2"/>
<rect x="73" y="272" width="500" height="16" fill="#5c5c5c"/>
<rect x="74" y="273" width="499" height="15" fill="#000"/>
<rect x="73" y="297" width="501" height="18" fill="#f2f2f2"/>
<rect x="73" y="297" width="500" height="17" fill="#5c5c5c"/>
<rect x="74" y="298" width="499" height="16" fill="#000"/>
<rect x="74" y="248" width="1" height="17" fill="#fff"/>
<rect x="88" y="248" width="484" height="17" fill="#fff"/>
<rect x="74" y="273" width="43" height="15" fill="#ff3333"/>
<rect x="77" y="273" width="1" height="15" fill="#000"/>
<rect x="204" y="273" width="80" height="15" fill="#ff3333"/>
<rect x="81" y="248" width="1" height="17" fill="#636331"/>
<rect x="123" y="273" width="1" height="15" fill="#636331"/>
<rect x="130" y="273" width="1" height="15" fill="#636331"/>
<rect x="137" y="273" width="1" height="15" fill="#636331"/>
<rect x="144" y="273" width="1" height="15" fill="#636331"/>
<rect x="151" y="273" width="1" height="15" fill="#636331"/>
<rect x="158" y="273" width="1" height="15" fill="#8c8c8c"/>
<rect x="165" y="273" width="1" height="15" fill="#636331"/>
<rect x="172" y="273" width="1" height="15" fill="#636331"/>
<rect x="179" y="273" width="1" height="15" fill="#636331"/>
<rect x="186" y="273" width="1" height="15" fill="#636331"/>
<rect x="193" y="273" width="1" height="15" fill="#636331"/>
<rect x="200" y="273" width="1" height="15" fill="#8c8c8c"/>
<rect x="284" y="273" width="1" height="15" fill="#8c8c8c"/>
<rect x="291" y="273" width="1" height="15" fill="#636331"/>
<rect x="298" y="273" width="1" height="15" fill="#636331"/>
<rect x="305" y="273" width="1" height="15" fill="#636331"/>
<rect x="312" y="273" width="1" height="15" fill="#636331"/>
<rect x="319" y="273" width="1" height="15" fill="#636331"/>
<rect x="326" y="273" width="1" height="15" fill="#8c8c8c"/>
<rect x="333" y="273" width="1" height="15" fill="#636331"/>
<rect x="340" y="273" width="1" height="15" fill="#636331"/>
<rect x="347" y="273" width="1" height="15" fill="#636331"/>
<rect x="354" y="273" width="1" height="15" fill="#636331"/>
<rect x="361" y="273" width="1" height="15" fill="#636331"/>
<rect x="368" y="273" width="1" height="15" fill="#8c8c8c"/>
<rect x="375" y="273" width="1" height="15" fill="#636331"/>
<rect x="382" y="273" width="1" height="15" fill="#636331"/>
<rect x="389" y="273" width="1" height="15" fill="#636331"/>
<rect x="396" y="273" width="1" height="15" fill="#636331"/>
<rect x="403" y="273" width="1" height="15" fill="#636331"/>
<rect x="410" y="273" width="1" height="15" fill="#8c8c8c"/>
<rect x="417" y="273" width="1" height="15" fill="#636331"/>
<rect x="424" y="273" width="1" height="15" fill="#636331"/>
<rect x="431" y="273" width="1" height="15" fill="#636331"/>
<rect x="438" y="273" width="1" height="15" fill="#636331"/>
<rect x="445" y="273" width="1" height="15" fill="#636331"/>
<rect x="452" y="273" width="1" height="15" fill="#8c8c8c"/>
<rect x="459" y="273" width="1" height="15" fill="#636331"/>
<rect x="466" y="273" width="1" height="15" fill="#636331"/>
<rect x="473" y="273" width="1" height="15" fill="#636331"/>
<rect x="480" y="273" width="1" height="15" fill="#636331"/>
<rect x="487" y="273" width="1" height="15" fill="#636331"/>
<rect x="494" y="273" width="1" height="15" fill="#8c8c8c"/>
<rect x="501" y="273" width="1" height="15" fill="#636331"/>
<rect x="508" y="273" width="1" height="15" fill="#636331"/>
<rect x="515" y="273" width="1" height="15" fill="#636331"/>
<rect x="522" y="273" width="1" height="15" fill="#636331"/>
<rect x="529" y="273" width="1" height="15" fill="#636331"/>
<rect x="536" y="273" width="1" height="15" fill="#8c8c8c"/>
<rect x="543" y="273" width="1" height="15" fill="#636331"/>
<rect x="550" y="273" width="1" height="15" fill="#636331"/>
<rect x="557" y="273" width="1" height="15" fill="#636331"/>
<rect x="564" y="273" width="1" height="15" fill="#636331"/>
<rect x="571" y="273" width="1" height="15" fill="#636331"/>
<rect x="81" y="298" width="1" height="16" fill="#636331"/>
<rect x="88" y="298" width="1" height="16" fill="#636331"/>
<rect x="95" y="298" width="1" height="16" fill="#636331"/>
<rect x="102" y="298" width="1" height="16" fill="#636331"/>
<rect x="109" y="298" width="1" height="16" fill="#636331"/>
<rect x="116" y="298" width="1" height="16" fill="#8c8c8c"/>
<rect x="123" y="298" width="1" height="16" fill="#636331"/>
<rect x="130" y="298" width="1" height="16" fill="#636331"/>
<rect x="137" y="298" width="1" height="16" fill="#636331"/>
<rect x="144" y="298" width="1" height="16" fill="#636331"/>
<rect x="151" y="298" width="1" height="16" fill="#636331"/>
<rect x="158" y="298" width="1" height="16" fill="#8c8c8c"/>
<rect x="165" y="298" width="1" height="16" fill="#636331"/>
<rect x="172" y="298" width="1" height="16" fill="#636331"/>
<rect x="179" y="298" width="1" height="16" fill="#636331"/>
<rect x="186" y="298" width="1" height="16" fill="#636331"/>
<rect x="193" y="298" width="1" height="16" fill="#636331"/>
<rect x="200" y="298" width="1" height="16" fill="#8c8c8c"/>
<rect x="207" y="298" width="1" height="16" fill="#636331"/>
<rect x="214" y="298" width="1" height="16" fill="#636331"/>
<rect x="221" y="298" width="1" height="16" fill="#636331"/>
<rect x="228" y="298" width="1" height="16" fill="#636331"/>
<rect x="235" y="298" width="1" height="16" fill="#636331"/>
<rect x="242" y="298" width="1" height="16" fill="#8c8c8c"/>
<rect x="249" y="298" width="1" height="16" fill="#636331"/>
<rect x="256" y="298" width="1" height="16" fill="#636331"/>
<rect x="263" y="298" width="1" height="16" fill="#636331"/>
<rect x="270" y="298" width="1" height="16" fill="#636331"/>
<rect x="277" y="298" width="1" height="16" fill="#636331"/>
<rect x="284" y="298" width="1" height="16" fill="#8c8c8c"/>
<rect x="291" y="298" width="1" height="16" fill="#636331"/>
<rect x="298" y="298" width="1" height="16" fill="#636331"/>
<rect x="305" y="298" width="1" height="16" fill="#636331"/>
<rect x="312" y="298" width="1" height="16" fill="#636331"/>
<rect x="319" y="298" width="1" height="16" fill="#636331"/>
<rect x="326" y="298" width="1" height="16" fill="#8c8c8c"/>
<rect x="333" y="298" width="1" height="16" fill="#636331"/>
<rect x="340" y="298" width="1" height="16" fill="#636331"/>
<rect x="347" y="298" width="1" height="16" fill="#636331"/>
<rect x="354" y="298" width="1" height="16" fill="#636331"/>
<rect x="361" y="298" width="1" height="16" fill="#636331"/>
<rect x="368" y="298" width="1" height="16" fill="#8c8c8c"/>
<rect x="375" y="298" width="1" height="16" fill="#636331"/>
<rect x="382" y="298" width="1" height="16" fill="#636331"/>
<rect x="389" y="298" width="1" height="16" fill="#636331"/>
<rect x="396" y="298" width="1" height="16" fill="#636331"/>
<rect x="403" y="298" width="1" height="16" fill="#636331"/>
<rect x="410" y="298" width="1" height="16" fill="#8c8c8c"/>
<rect x="417" y="298" width="1" height="16" fill="#636331"/>
<rect x="424" y="298" width="1" height="16" fill="#636331"/>
<rect x="431" y="298" width="1" height="16" fill="#636331"/>
<rect x="438" y="298" width="1" height="16" fill="#636331"/>
<rect x="445" y="298" width="1" height="16" fill="#636331"/>
<rect x="452" y="298" width="1" height="16" fill="#8c8c8c"/>
<rect x="459" y="298" width="1" height="16" fill="#636331"/>
<rect x="466" y="298" width="1" height="16" fill="#636331"/>
<rect x="473" y="298" width="1" height="16" fill="#636331"/>
<rect x="480" y="298" width="1" height="16" fill="#636331"/>
<rect x="487" y="298" width="1" height="16" fill="#636331"/>
<rect x="494" y="298" width="1" height="16" fill="#8c8c8c"/>
<rect x="501" y="298" width="1" height="16" fill="#636331"/>
<rect x="508" y="298" width="1" height="16" fill="#636331"/>
<rect x="515" y="298" width="1" height="16" fill="#636331"/>
<rect x="522" y="298" width="1" height="16" fill="#636331"/>
<rect x="529" y="298" width="1" height="16" fill="#636331"/>
<rect x="536" y="298" width="1" height="16" fill="#8c8c8c"/>
<rect x="543" y="298" width="1" height="16" fill="#636331"/>
<rect x="550" y="298" width="1" height="16" fill="#636331"/>
<rect x="557" y="298" width="1" height="16" fill="#636331"/>
<rect x="564" y="298" width="1" height="16" fill="#636331"/>
<rect x="571" y="298" width="1" height="16" fill="#636331"/>
<rect x="163" y="248" width="1" height="17" fill="#000"/>
<rect x="283" y="248" width="1" height="17" fill="#000"/>
<rect x="571" y="248" width="1" height="17" fill="#636331"/>
<rect x="74" y="316" width="1" height="5" fill="#000"/>
<rect x="572" y="316" width="1" height="5" fill="#000"/>
<rect x="81" y="316" width="1" height="3" fill="#000"/>
<rect x="88" y="316" width="1" height="3" fill="#000"/>
<rect x="95" y="316" width="1" height="3" fill="#000"/>
<rect x="102" y="316" width="1" height="3" fill="#000"/>
<rect x="109" y="316" width="1" height="3" fill="#000"/>
<rect x="116" y="316" width="1" height="5" fill="#000"/>
<rect x="123" y="316" width="1" height="3" fill="#000"/>
<rect x="130" y="316" width="1" height="3" fill="#000"/>
<rect x="137" y="316" width="1" height="3" fill="#000"/>
<rect x="144" y="316" width="1" height="3" fill="#000"/>
<rect x="151" y="316" width="1" height="3" fill="#000"/>
<rect x="158" y="316" width="1" height="5" fill="#000"/>
<rect x="165" y="316" width="1" height="3" fill="#000"/>
<rect x="172" y="316" width="1" height="3" fill="#000"/>
<rect x="179" y="316" width="1" height="3" fill="#000"/>
<rect x="186" y="316" width="1" height="3" fill="#000"/>
<rect x="193" y="316" width="1" height="3" fill="#000"/>
<rect x="200" y="316" width="1" height="5" fill="#000"/>
<rect x="207" y="316" width="1" height="3" fill="#000"/>
<rect x="214" y="316" width="1" height="3" fill="#000"/>
<rect x="221" y="316" width="1" height="3" fill="#000"/>
<rect x="228" y="316" width="1" height="3" fill="#000"/>
<rect x="235" y="316" width="1" height="3" fill="#000"/>
<rect x="242" y="316" width="1" height="5" fill="#000"/>
<rect x="249" y="316" width="1" height="3" fill="#000"/>
<rect x="256" y="316" width="1" height="3" fill="#000"/>
<rect x="263" y="316" width="1" height="3" fill="#000"/>
<rect x="270" y="316" width="1" height="3" fill="#000"/>
<rect x="277" y="316" width="1" height="3" fill="#000"/>
<rect x="284" y="316" width="1" height="5" fill="#000"/>
<rect x="291" y="316" width="1" height="3" fill="#000"/>
<rect x="298" y="316" width="1" height="3" fill="#000"/>
<rect x="305" y="316" width="1" height="3" fill="#000"/>
<rect x="312" y="316" width="1" height="3" fill="#000"/>
<rect x="319" y="316" width="1" height="3" fill="#000"/>
<rect x="326" y="316" width="1" height="5" fill="#000"/>
<rect x="333" y="316" width="1" height="3" fill="#000"/>
<rect x="340" y="316" width="1" height="3" fill="#000"/>
<rect x="347" y="316" width="1" height="3" fill="#000"/>
<rect x="354" y="316" width="1" height="3" fill="#000"/>
<rect x="361" y="316" width="1" height="3" fill="#000"/>
<rect x="368" y="316" width="1" height="5" fill="#000"/>
<rect x="375" y="316" width="1" height="3" fill="#000"/>
<rect x="382" y="316" width="1" height="3" fill="#000"/>
<rect x="389" y="316" width="1" height="3" fill="#000"/>
<rect x="396" y="316" width="1" height="3" fill="#000"/>
<rect x="403" y="316" width="1" height="3" fill="#000"/>
<rect x="410" y="316" width="1" height="5" fill="#000"/>
<rect x="417" y="316" width="1" height="3" fill="#000"/>
<rect x="424" y="316" width="1" height="3" fill="#000"/>
<rect x="431" y="316" width="1" height="3" fill="#000"/>
<rect x="438" y="316" width="1" height="3" fill="#000"/>
<rect x="445" y="316" width="1" height="3" fill="#000"/>
<rect x="452" y="316" width="1" height="5" fill="#000"/>
<rect x="459" y="316" width="1" height="3" fill="#000"/>
<rect x="466" y="316" width="1" height="3" fill="#000"/>
<rect x="473" y="316" width="1" height="3" fill="#000"/>
<rect x="480" y="316" width="1" height="3" fill="#000"/>
<rect x="487" y="316" width="1" height="3" fill="#000"/>
<rect x="494" y="316" width="1" height="5" fill="#000"/>
<rect x="501" y="316" width="1" height="3" fill="#000"/>
<rect x="508" y="316" width="1" height="3" fill="#000"/>
<rect x="515" y="316" width="1" height="3" fill="#000"/>
<rect x="522" y="316" width="1" height="3" fill="#000"/>
<rect x="529" y="316" width="1" height="3" fill="#000"/>
<rect x="536" y="316" width="1" height="5" fill="#000"/>
<rect x="543" y="316" width="1" height="3" fill="#000"/>
<rect x="550" y="316" width="1" height="3" fill="#000"/>
<rect x="557" y="316" width="1" height="3" fill="#000"/>
<rect x="564" y="316" width="1" height="3" fill="#000"/>
<rect x="571" y="316" width="1" height="3" fill="#000"/>
</g>
<g font-family="Liberation Sans, sans-serif" font-size="11" stroke="#000" stroke-width="0.25" fill="#000">
<rect x="60" y="321" width="29" height="26" fill="#b0b0b0" stroke="none"/>
<text x="59.7" y="331.5" text-anchor="start" textLength="27" lengthAdjust="spacingAndGlyphs">00:01</text>
<text x="59.7" y="344.5" text-anchor="start" textLength="27" lengthAdjust="spacingAndGlyphs">09/12</text>
<rect x="102" y="321" width="29" height="26" fill="#b0b0b0" stroke="none"/>
<text x="101.7" y="331.5" text-anchor="start" textLength="27" lengthAdjust="spacingAndGlyphs">02:00</text>
<text x="101.7" y="344.5" text-anchor="start" textLength="27" lengthAdjust="spacingAndGlyphs">09/12</text>
<rect x="144" y="321" width="29" height="26" fill="#b0b0b0" stroke="none"/>
<text x="143.7" y="331.5" text-anchor="start" textLength="27" lengthAdjust="spacingAndGlyphs">04:00</text>
<text x="143.7" y="344.5" text-anchor="start" textLength="27" lengthAdjust="spacingAndGlyphs">09/12</text>
<rect x="186" y="321" width="29" height="26" fill="#b0b0b0" stroke="none"/>
<text x="185.7" y="331.5" text-anchor="start" textLength="27" lengthAdjust="spacingAndGlyphs">06:00</text>
<text x="185.7" y="344.5" text-anchor="start" textLength="27" lengthAdjust="spacingAndGlyphs">09/12</text>
<rect x="228" y="321" width="29" height="26" fill="#b0b0b0" stroke="none"/>
<text x="227.7" y="331.5" text-anchor="start" textLength="27" lengthAdjust="spacingAndGlyphs">08:00</text>
<text x="227.7" y="344.5" text-anchor="start" textLength="27" lengthAdjust="spacingAndGlyphs">09/12</text>
<rect x="270" y="321" width="29" height="26" fill="#b0b0b0" stroke="none"/>
<text x="269.7" y="331.5" text-anchor="start" textLength="27" lengthAdjust="spacingAndGlyphs">10:00</text>
<text x="269.7" y="344.5" text-anchor="start" textLength="27" lengthAdjust="spacingAndGlyphs">09/12</text>
<rect x="312" y="321" width="29" height="26" fill="#b0b0b0" stroke="none"/>
<text x="311.7" y="331.5" text-anchor="start" textLength="27" lengthAdjust="spacingAndGlyphs">12:00</text>
<text x="311.7" y="344.5" text-anchor="start" textLength="27" lengthAdjust="spacingAndGlyphs">09/12</text>
<rect x="354" y="321" width="29" height="26" fill="#b0b0b0" stroke="none"/>
<text x="353.7" y="331.5" text-anchor="start" textLength="27" lengthAdjust="spacingAndGlyphs">14:00</text>
<text x="353.7" y="344.5" text-anchor="start" textLength="27" lengthAdjust="spacingAndGlyphs">09/12</text>
<rect x="396" y="321" width="29" height="26" fill="#b0b0b0" stroke="none"/>
<text x="395.7" y="331.5" text-anchor="start" textLength="27" lengthAdjust="spacingAndGlyphs">16:00</text>
<text x="395.7" y="344.5" text-anchor="start" textLength="27" lengthAdjust="spacingAndGlyphs">09/12</text>
<rect x="438" y="321" width="29" height="26" fill="#b0b0b0" stroke="none"/>
<text x="437.7" y="331.5" text-anchor="start" textLength="27" lengthAdjust="spacingAndGlyphs">18:00</text>
<text x="437.7" y="344.5" text-anchor="start" textLength="27" lengthAdjust="spacingAndGlyphs">09/12</text>
<rect x="480" y="321" width="29" height="26" fill="#b0b0b0" stroke="none"/>
<text x="479.7" y="331.5" text-anchor="start" textLength="27" lengthAdjust="spacingAndGlyphs">20:00</text>
<text x="479.7" y="344.5" text-anchor="start" textLength="27" lengthAdjust="spacingAndGlyphs">09/12</text>
<rect x="522" y="321" width="29" height="26" fill="#b0b0b0" stroke="none"/>
<text x="521.7" y="331.5" text-anchor="start" textLength="27" lengthAdjust="spacingAndGlyphs">22:00</text>
<text x="521.7" y="344.5" text-anchor="start" textLength="27" lengthAdjust="spacingAndGlyphs">09/12</text>
<rect x="558" y="321" width="29" height="26" fill="#b0b0b0" stroke="none"/>
<text x="557.7" y="331.5" text-anchor="start" textLength="27" lengthAdjust="spacingAndGlyphs">23:42</text>
<text x="557.7" y="344.5" text-anchor="start" textLength="27" lengthAdjust="spacingAndGlyphs">09/12</text>
</g>
<rect x="593" y="27" width="140" height="42" fill="#cdcdcd" />
<rect x="593" y="27" width="140" height="1" fill="#d3d3d3" />
<rect x="593" y="27" width="1" height="42" fill="#d3d3d3" />
<rect x="733" y="28" width="5" height="41" fill="#ababab" />
<rect x="738" y="28" width="6" height="41" fill="#999999" />
<rect x="742" y="28" width="2" height="41" fill="#8c8c8c" />
<rect x="744" y="27" width="1" height="42" fill="#707070" />
<rect x="745" y="27" width="1" height="42" fill="#585858" />
<rect x="595" y="67" width="149" height="1" fill="#a4a4a4" />
<rect x="595" y="68" width="149" height="1" fill="#787878" />
<rect x="593" y="69" width="140" height="24" fill="#cdcdcd" />
<rect x="593" y="69" width="140" height="1" fill="#d3d3d3" />
<rect x="593" y="69" width="1" height="24" fill="#d3d3d3" />
<rect x="733" y="70" width="5" height="23" fill="#ababab" />
<rect x="738" y="70" width="6" height="23" fill="#999999" />
<rect x="742" y="70" width="2" height="23" fill="#8c8c8c" />
<rect x="744" y="69" width="1" height="24" fill="#707070" />
<rect x="745" y="69" width="1" height="24" fill="#585858" />
<rect x="595" y="91" width="149" height="1" fill="#a4a4a4" />
<rect x="595" y="92" width="149" height="1" fill="#787878" />
<rect x="593" y="243" width="140" height="63" fill="#cdcdcd" />
<rect x="593" y="243" width="140" height="1" fill="#d3d3d3" />
<rect x="593" y="243" width="1" height="63" fill="#d3d3d3" />
<rect x="733" y="244" width="5" height="62" fill="#ababab" />
<rect x="738" y="244" width="6" height="62" fill="#999999" />
<rect x="742" y="244" width="2" height="62" fill="#8c8c8c" />
<rect x="744" y="243" width="1" height="63" fill="#707070" />
<rect x="745" y="243" width="1" height="63" fill="#585858" />
<rect x="595" y="304" width="149" height="1" fill="#a4a4a4" />
<rect x="595" y="305" width="149" height="1" fill="#787878" />
<rect x="593" y="306" width="140" height="25" fill="#cdcdcd" />
<rect x="593" y="306" width="140" height="1" fill="#d3d3d3" />
<rect x="593" y="306" width="1" height="25" fill="#d3d3d3" />
<rect x="733" y="307" width="5" height="24" fill="#ababab" />
<rect x="738" y="307" width="6" height="24" fill="#999999" />
<rect x="742" y="307" width="2" height="24" fill="#8c8c8c" />
<rect x="744" y="306" width="1" height="25" fill="#707070" />
<rect x="745" y="306" width="1" height="25" fill="#585858" />
<rect x="595" y="329" width="149" height="1" fill="#a4a4a4" />
<rect x="595" y="330" width="149" height="1" fill="#787878" />
<g font-family="Liberation Sans, sans-serif" font-size="11" stroke="#000" stroke-width="0.25" fill="#000">
<text x="606.5" y="40.5" text-anchor="start"  textLength="78.5" lengthAdjust="spacingAndGlyphs">Last Hour Power</text>
<text x="606.5" y="61.5" text-anchor="start"  textLength="69.5" lengthAdjust="spacingAndGlyphs">Present Power</text>
<text x="606.5" y="257" text-anchor="start"  textLength="20" lengthAdjust="spacingAndGlyphs">UHF</text>
<text x="606.5" y="278" text-anchor="start"  textLength="19.5" lengthAdjust="spacingAndGlyphs">VHF</text>
<text x="606.5" y="299" text-anchor="start"  textLength="36.5" lengthAdjust="spacingAndGlyphs">Heating</text>
</g>
<rect x="702" y="29" width="28" height="37" fill="#666" />
<rect x="703" y="30" width="27" height="36" fill="#000" />
<clipPath id="c2"><rect x="703" y="30" width="27" height="36"/></clipPath><g clip-path="url(#c2)">
<polyline points="704.2,40.6 712.5,32.2 720.6,40.6 729.0,32.2 731.0,34.2" fill="none" stroke="#fff" stroke-width="1" stroke-linejoin="miter" shape-rendering="crispEdges"/>
<polyline points="704.2,61.5 712.5,53.3 720.6,61.5 729.0,53.3 731.0,55.3" fill="none" stroke="#ff3333" stroke-width="1" stroke-linejoin="miter" shape-rendering="crispEdges"/>
</g>
<rect x="701" y="244" width="29" height="59" fill="#666" />
<rect x="702" y="245" width="28" height="58" fill="#000" />
<path shape-rendering="crispEdges" fill="#fff" d="M703,252h5v-4h7v4h7v-4h8v5h-7v4h-8v-4h-6v4h-6z"/>
<path shape-rendering="crispEdges" fill="#ff3333" d="M703,273h5v-4h7v4h7v-4h8v5h-7v4h-8v-4h-6v4h-6z"/>
<path shape-rendering="crispEdges" fill="#00ee22" d="M703,294h5v-4h7v4h7v-4h8v5h-7v4h-8v-4h-6v4h-6z"/>
<g shape-rendering="crispEdges">
<rect x="608" y="73" width="20" height="16" fill="#5a5a5a"/>
<rect x="609" y="74" width="19" height="15" fill="#7a7a7a"/>
<rect x="618" y="75" width="1" height="13" fill="#000"/>
<rect x="612" y="81" width="13" height="1" fill="#000"/>
<rect x="617" y="80" width="3" height="3" fill="#000"/>
<rect x="618" y="81" width="1" height="1" fill="#fff"/>
<rect x="612" y="76" width="1" height="3" fill="#4f4"/>
<rect x="611" y="77" width="3" height="1" fill="#4f4"/>
<rect x="610" y="85" width="1" height="2" fill="#5a5a5a"/>
<rect x="630" y="73" width="19" height="16" fill="#8e8e8e"/>
<rect x="630" y="73" width="18" height="15" fill="#dedede"/>
<rect x="631" y="74" width="17" height="14" fill="#bcbcbc"/>
<rect x="646" y="74" width="2" height="14" fill="#a8a8a8"/>
<rect x="632" y="76" width="4" height="4" fill="#8a968a"/>
<rect x="633" y="77" width="2" height="2" fill="#1f7a1f"/>
<rect x="651" y="73" width="19" height="16" fill="#8e8e8e"/>
<rect x="651" y="73" width="18" height="15" fill="#dedede"/>
<rect x="652" y="74" width="17" height="14" fill="#bcbcbc"/>
<rect x="667" y="74" width="2" height="14" fill="#a8a8a8"/>
<rect x="653" y="76" width="4" height="4" fill="#8a968a"/>
<rect x="654" y="77" width="2" height="2" fill="#1f7a1f"/>
</g>
<path d="M638.2,83.2l-4,4" stroke="#000" stroke-width="2.6" fill="none"/>
<path d="M637.8,83.6l-3.2,3.2" stroke="#9a9a9a" stroke-width="0.9" fill="none"/>
<circle cx="641.8" cy="79.4" r="4.2" fill="#dcdcff" stroke="#000" stroke-width="1.1"/>
<path d="M639.3,79.5h5M641.8,77v5" stroke="#000" stroke-width="1.2" fill="none"/>
<path shape-rendering="crispEdges" d="M642,85h5v1h-1v1h-1v1h-1v-1h-1v-1h-1z" fill="#000"/>
<path d="M654.3,81.4 L655.6,80.3 L657.2,82.3 V77.7 Q657.2,76.6 658.3,76.6 Q659.5,76.6 659.5,77.7 V76.4 Q659.5,75.2 660.8,75.2 Q662.1,75.2 662.1,76.4 V77.2 Q662.1,76.1 663.4,76.1 Q664.6,76.1 664.6,77.2 V78.8 Q664.6,77.8 665.7,77.8 Q666.7,77.8 666.7,78.8 V82.0 L664.0,87.0 H658.6 Z" fill="#c6c6c6" stroke="#000" stroke-width="0.9" stroke-linejoin="round"/>
<path d="M659.5,77.5V81.0M662.1,76.5V81.0M664.6,77.5V81.0" fill="none" stroke="#000" stroke-width="0.9"/>
<g shape-rendering="crispEdges">
<rect x="606" y="310" width="20" height="16" fill="#5a5a5a"/>
<rect x="607" y="311" width="19" height="15" fill="#7a7a7a"/>
<rect x="616" y="312" width="1" height="13" fill="#000"/>
<rect x="610" y="318" width="13" height="1" fill="#000"/>
<rect x="615" y="317" width="3" height="3" fill="#000"/>
<rect x="616" y="318" width="1" height="1" fill="#fff"/>
<rect x="610" y="313" width="1" height="3" fill="#4f4"/>
<rect x="609" y="314" width="3" height="1" fill="#4f4"/>
<rect x="608" y="322" width="1" height="2" fill="#5a5a5a"/>
<rect x="628" y="310" width="19" height="16" fill="#8e8e8e"/>
<rect x="628" y="310" width="18" height="15" fill="#dedede"/>
<rect x="629" y="311" width="17" height="14" fill="#bcbcbc"/>
<rect x="644" y="311" width="2" height="14" fill="#a8a8a8"/>
<rect x="630" y="313" width="4" height="4" fill="#8a968a"/>
<rect x="631" y="314" width="2" height="2" fill="#1f7a1f"/>
<rect x="649" y="310" width="19" height="16" fill="#8e8e8e"/>
<rect x="649" y="310" width="18" height="15" fill="#dedede"/>
<rect x="650" y="311" width="17" height="14" fill="#bcbcbc"/>
<rect x="665" y="311" width="2" height="14" fill="#a8a8a8"/>
<rect x="651" y="313" width="4" height="4" fill="#8a968a"/>
<rect x="652" y="314" width="2" height="2" fill="#1f7a1f"/>
</g>
<path d="M636.2,320.2l-4,4" stroke="#000" stroke-width="2.6" fill="none"/>
<path d="M635.8,320.6l-3.2,3.2" stroke="#9a9a9a" stroke-width="0.9" fill="none"/>
<circle cx="639.8" cy="316.4" r="4.2" fill="#dcdcff" stroke="#000" stroke-width="1.1"/>
<path d="M637.3,316.5h5M639.8,314v5" stroke="#000" stroke-width="1.2" fill="none"/>
<path shape-rendering="crispEdges" d="M640,322h5v1h-1v1h-1v1h-1v-1h-1v-1h-1z" fill="#000"/>
<path d="M652.3,318.4 L653.6,317.3 L655.2,319.3 V314.7 Q655.2,313.6 656.3,313.6 Q657.5,313.6 657.5,314.7 V313.4 Q657.5,312.2 658.8,312.2 Q660.1,312.2 660.1,313.4 V314.2 Q660.1,313.1 661.4,313.1 Q662.6,313.1 662.6,314.2 V315.8 Q662.6,314.8 663.7,314.8 Q664.7,314.8 664.7,315.8 V319.0 L662.0,324.0 H656.6 Z" fill="#c6c6c6" stroke="#000" stroke-width="0.9" stroke-linejoin="round"/>
<path d="M657.5,314.5V318.0M660.1,313.5V318.0M662.6,314.5V318.0" fill="none" stroke="#000" stroke-width="0.9"/>
<g font-family="Liberation Sans, sans-serif" font-size="11" stroke="#000" stroke-width="0.25" fill="#000">
<text x="43.5" y="368" text-anchor="start"  textLength="116" lengthAdjust="spacingAndGlyphs">Data from PowerMonitor</text>
<text x="423" y="368" text-anchor="start"  textLength="112.5" lengthAdjust="spacingAndGlyphs">Command to PowerMon</text>
</g>
<g shape-rendering="crispEdges">
<rect x="43" y="372" width="375" height="4" fill="#999999"/>
<rect x="43" y="372" width="4" height="70" fill="#999999"/>
</g>
<polygon points="43,442 47,438 47,442" fill="#cdcdcd"/>
<polygon points="418,372 418,376 414,376" fill="#cdcdcd"/>
<clipPath id="c3"><rect x="47" y="377.2" width="349" height="64"/></clipPath>
<g font-family="Liberation Sans, sans-serif" font-size="11" stroke="#000" stroke-width="0.25" fill="#000" clip-path="url(#c3)" xml:space="preserve">
<text x="48.5" y="384" text-anchor="start"  textLength="54.3" lengthAdjust="spacingAndGlyphs">2009 12 09</text>
<text x="114.5" y="384" text-anchor="start"  textLength="44.1" lengthAdjust="spacingAndGlyphs">23:57:00</text>
<text x="170.5" y="384" text-anchor="start" >455</text>
<text x="194.5" y="384" text-anchor="start"  textLength="50.8" lengthAdjust="spacingAndGlyphs">559 88231</text>
<text x="252" y="384" text-anchor="start"  textLength="18.7" lengthAdjust="spacingAndGlyphs">U__</text>
<text x="48.5" y="397" text-anchor="start"  textLength="54.3" lengthAdjust="spacingAndGlyphs">2009 12 09</text>
<text x="114.5" y="397" text-anchor="start"  textLength="44.1" lengthAdjust="spacingAndGlyphs">23:58:00</text>
<text x="170.5" y="397" text-anchor="start" >527</text>
<text x="194.5" y="397" text-anchor="start"  textLength="50.8" lengthAdjust="spacingAndGlyphs">559 88240</text>
<text x="252" y="397" text-anchor="start"  textLength="17.6" lengthAdjust="spacingAndGlyphs">___</text>
<text x="48.5" y="410" text-anchor="start"  textLength="54.3" lengthAdjust="spacingAndGlyphs">2009 12 09</text>
<text x="114.5" y="410" text-anchor="start"  textLength="44.1" lengthAdjust="spacingAndGlyphs">23:59:00</text>
<text x="170.5" y="410" text-anchor="start" >575</text>
<text x="194.5" y="410" text-anchor="start"  textLength="50.8" lengthAdjust="spacingAndGlyphs">559 88250</text>
<text x="252" y="410" text-anchor="start"  textLength="17.6" lengthAdjust="spacingAndGlyphs">___</text>
<text x="48.5" y="423" text-anchor="start"  textLength="54.3" lengthAdjust="spacingAndGlyphs">2009 12 09</text>
<text x="114.5" y="423" text-anchor="start"  textLength="44.1" lengthAdjust="spacingAndGlyphs">00:00:00</text>
<text x="170.5" y="423" text-anchor="start" >563</text>
<text x="194.5" y="423" text-anchor="start"  textLength="50.8" lengthAdjust="spacingAndGlyphs">559 88259</text>
<text x="252" y="423" text-anchor="start"  textLength="17.6" lengthAdjust="spacingAndGlyphs">___</text>
</g>
<g shape-rendering="crispEdges">
<rect x="411" y="392" width="1" height="16" fill="#fff"/>
<rect x="412" y="392" width="1" height="16" fill="#222"/>
<rect x="397" y="378" width="16" height="15" fill="#202020"/>
<rect x="397" y="378" width="15" height="13" fill="#f4f4f4"/>
<rect x="398" y="379" width="14" height="12" fill="#d0d0d0"/>
<rect x="397" y="408" width="16" height="15" fill="#202020"/>
<rect x="397" y="408" width="15" height="13" fill="#f4f4f4"/>
<rect x="398" y="409" width="14" height="12" fill="#d0d0d0"/>
<rect x="397" y="423" width="16" height="15" fill="#202020"/>
<rect x="397" y="423" width="15" height="13" fill="#f4f4f4"/>
<rect x="398" y="424" width="14" height="12" fill="#d0d0d0"/>
</g>
<g shape-rendering="crispEdges" fill="#000"><rect x="405" y="383" width="1" height="1"/><rect x="404" y="384" width="3" height="1"/><rect x="403" y="385" width="5" height="1"/><rect x="403" y="430" width="5" height="1"/><rect x="404" y="431" width="3" height="1"/><rect x="405" y="432" width="1" height="1"/></g>
<g shape-rendering="crispEdges">
<rect x="422" y="373" width="106" height="4" fill="#999999"/>
<rect x="422" y="373" width="4" height="23" fill="#999999"/>
<rect x="426" y="377" width="99" height="15" fill="#fff"/>
</g>
<polygon points="422,396 426,392 426,396" fill="#cdcdcd"/><polygon points="528,373 528,377 524,377" fill="#cdcdcd"/>
<rect x="531" y="373" width="45" height="22" fill="#4a4a4a"/>
<rect x="532" y="374" width="43" height="20" fill="#d2d2d2"/>
<polygon points="532,394 575,394 569,384.6 539,384.6" fill="#a3a3a3"/>
<polygon points="575,374 575,394 569,384.6 571.5,374" fill="#8b8b8b"/>
<polygon points="532,374 534,374 536,380 539,384.6 532,394" fill="#dedede"/>
<rect x="532" y="374" width="40" height="1" fill="#e6e6e6"/>
<g font-family="Liberation Sans, sans-serif" font-size="11" stroke="#000" stroke-width="0.25" fill="#000">
<text x="553" y="388.5" text-anchor="middle"  textLength="24" lengthAdjust="spacingAndGlyphs">Send</text>
</g>
</svg></body></html>
